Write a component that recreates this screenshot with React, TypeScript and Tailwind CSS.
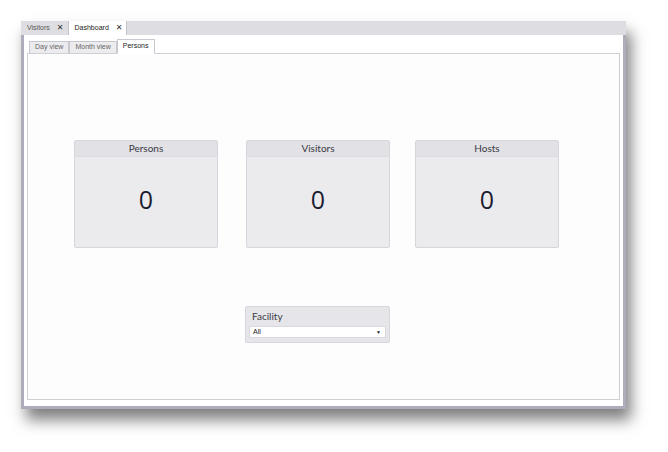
import React from 'react';

// ========== 小组件 ==========
function DocTab({ label, active }: { label: string; active?: boolean }) {
  return (
    <div
      className={`h-full flex items-center gap-[7px] pl-[6px] pr-[4px] border-r border-[#c4c4cc] text-[7px] ${
        active ? 'bg-white text-[#222]' : 'text-[#555]'
      }`}
    >
      <span>{label}</span>
      <span className="text-[8px] leading-none text-[#333]">✕</span>
    </div>
  );
}

function ViewTab({ label, active }: { label: string; active?: boolean }) {
  return (
    <div
      className={`flex items-center px-[5px] border border-[#c8c8d0] text-[7px] ${
        active ? 'h-[15px] bg-white border-b-white text-[#222] -mb-px z-10' : 'h-[12px] bg-[#ececef] text-[#666] border-b-0'
      }`}
    >
      {label}
    </div>
  );
}

function CountCard({ title, value, className }: { title: string; value: number; className?: string }) {
  return (
    <div className={`w-[144px] h-[108px] flex flex-col rounded-[2px] border border-[#d6d6dc] bg-[#ebebee] ${className || ''}`}>
      <div className="h-[16px] flex items-center justify-center bg-[#e1e1e6] border-b border-[#dcdce2] text-[10px] text-[#3a3a44]">
        {title}
      </div>
      <div
        className="flex-1 flex items-center justify-center pb-[4px] text-[25px] text-[#1c1c30]"
        style={{ fontFamily: '"Open Sans", sans-serif' }}
      >
        {value}
      </div>
    </div>
  );
}

// ========== 主页面 ==========
export default function App() {
  return (
    <div
      className="w-[668px] h-[452px] bg-white pt-[21px] pl-[21px] overflow-hidden"
      style={{ fontFamily: '"Liberation Sans", "DejaVu Sans", sans-serif' }}
    >
      <div className="w-[605px] h-[388px] flex flex-col shadow-[5px_11px_14px_rgba(0,0,0,0.5)]">
        {/* 文档标签栏 */}
        <div className="h-[14px] flex bg-[#dedee2]">
          <DocTab label="Visitors" />
          <DocTab label="Dashboard" active />
        </div>

        {/* 窗口主体 */}
        <div className="flex-1 flex flex-col bg-white border-x-[3px] border-b-[3px] border-[#acacba] px-[3px] pt-[4px] pb-[6px]">
          <div className="h-[14px] flex items-end pl-[2px]">
            <ViewTab label="Day view" />
            <ViewTab label="Month view" />
            <ViewTab label="Persons" active />
          </div>
          <div
            className="flex-1 flex flex-col border border-[#cfcfd6] bg-[#fdfdfd]"
            style={{ fontFamily: 'Lato, "Open Sans", sans-serif' }}
          >
            <div className="flex pt-[86px] pl-[46px]">
              <CountCard title="Persons" value={0} />
              <CountCard title="Visitors" value={0} className="ml-[28px]" />
              <CountCard title="Hosts" value={0} className="ml-[25px]" />
            </div>

            <div className="mt-[58px] ml-[217px] w-[145px] h-[37px] flex flex-col rounded-[2px] border border-[#d6d6dc] bg-[#e6e6ea]">
              <div className="h-[19px] flex items-center pl-[6px] text-[10px] text-[#3a3a44]">Facility</div>
              <div className="mx-[3px] h-[12px] flex items-center justify-between bg-white border border-[#d8d8de] pl-[3px] pr-[4px] text-[7px] text-[#222]">
                <span style={{ fontFamily: '"Liberation Sans", sans-serif' }}>All</span>
                <span className="text-[5px] leading-none">▼</span>
              </div>
            </div>
          </div>
        </div>
      </div>
    </div>
  );
}
